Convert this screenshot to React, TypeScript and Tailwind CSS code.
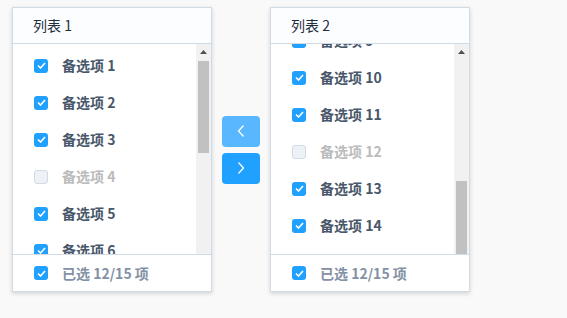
import { useState } from "react";

type Item = { key: number; label: string; disabled?: boolean };

const ITEMS: Item[] = Array.from({ length: 15 }, (_, i) => ({
  key: i + 1,
  label: `备选项 ${i + 1}`,
  disabled: i % 8 === 3,
}));

function Checkbox({ checked, disabled }: { checked: boolean; disabled?: boolean }) {
  if (disabled) {
    return <span className="h-[14px] w-[14px] shrink-0 rounded-[3px] border border-[#d1dbe5] bg-[#eef1f6]" />;
  }
  return (
    <span className="flex h-[14px] w-[14px] shrink-0 items-center justify-center rounded-[3px] bg-[#20a0ff]">
      {checked && (
        <svg width="9" height="7" viewBox="0 0 9 7" fill="none">
          <polyline points="1,3.5 3.5,6 8,1" stroke="#fff" strokeWidth="1.6" />
        </svg>
      )}
    </span>
  );
}

function Scrollbar({ thumbTop, thumbHeight }: { thumbTop: number; thumbHeight: number }) {
  return (
    <div className="relative w-[15px] shrink-0 bg-[#f1f1f1]">
      <div className="flex h-[15px] items-center justify-center">
        <svg width="7" height="4" viewBox="0 0 7 4">
          <polygon points="0,4 3.5,0 7,4" fill="#505050" />
        </svg>
      </div>
      <div
        className="absolute left-[2px] right-[2px] bg-[#c1c1c1]"
        style={{ top: thumbTop, height: thumbHeight }}
      />
    </div>
  );
}

function Panel({
  title,
  from,
  to,
  offset,
  thumbTop,
  thumbHeight,
}: {
  title: string;
  from: number;
  to: number;
  offset: number;
  thumbTop: number;
  thumbHeight: number;
}) {
  const [checked] = useState(() => new Set(ITEMS.filter((i) => !i.disabled).map((i) => i.key)));

  // only the rows that show in the viewport are rendered
  const visible = ITEMS.slice(from - 1, to);

  return (
    <div className="flex h-[285px] w-[200px] flex-col border border-[#d1dbe5] bg-white shadow-[0_2px_4px_rgba(0,0,0,0.12),0_0_6px_rgba(0,0,0,0.04)]">
      <div className="flex h-[36px] shrink-0 items-center border-b border-[#d1dbe5] bg-[#fbfdff] pl-5 text-[14px] text-[#1f2d3d]">
        {title}
      </div>
      <div className="flex h-[210px] shrink-0">
        <div className="flex-1 overflow-hidden">
          <ul className="pt-[3px]" style={{ marginTop: -offset }}>
            {visible.map((item) => (
              <li key={item.key} className="flex h-[37px] items-center pl-[21px]">
                <Checkbox checked={checked.has(item.key)} disabled={item.disabled} />
                <span
                  className={`ml-[14px] text-[14px] font-bold ${item.disabled ? "text-[#bbbbbb]" : "text-[#48576a]"}`}
                >
                  {item.label}
                </span>
              </li>
            ))}
          </ul>
        </div>
        <Scrollbar thumbTop={thumbTop} thumbHeight={thumbHeight} />
      </div>
      <div className="flex h-[37px] shrink-0 items-center border-t border-[#d1dbe5] pl-[21px]">
        <Checkbox checked />
        <span className="ml-[14px] text-[14px] font-bold text-[#8391a5]">已选 12/15 项</span>
      </div>
    </div>
  );
}

export default function App() {
  return (
    <div
      className="flex h-[318px] w-[567px] items-start bg-[#f9f9f9] pl-[12px] pt-[7px]"
      style={{ fontFamily: '"Noto Sans CJK SC", "Noto Sans", sans-serif' }}
    >
      <Panel title="列表 1" from={1} to={6} offset={0} thumbTop={17} thumbHeight={92} />
      <div className="mx-[10px] flex h-[285px] flex-col items-center justify-center gap-[6px]">
        <button className="flex h-[31px] w-[38px] items-center justify-center rounded-[4px] bg-[#58b7ff]">
          <svg width="8" height="14" viewBox="0 0 8 14" fill="none">
            <polyline points="6.5,1.5 1.5,7 6.5,12.5" stroke="#fff" strokeWidth="1.3" />
          </svg>
        </button>
        <button className="flex h-[31px] w-[38px] items-center justify-center rounded-[4px] bg-[#20a0ff]">
          <svg width="8" height="14" viewBox="0 0 8 14" fill="none">
            <polyline points="1.5,1.5 6.5,7 1.5,12.5" stroke="#fff" strokeWidth="1.3" />
          </svg>
        </button>
      </div>
      <Panel title="列表 2" from={9} to={14} offset={25} thumbTop={137} thumbHeight={73} />
    </div>
  );
}
